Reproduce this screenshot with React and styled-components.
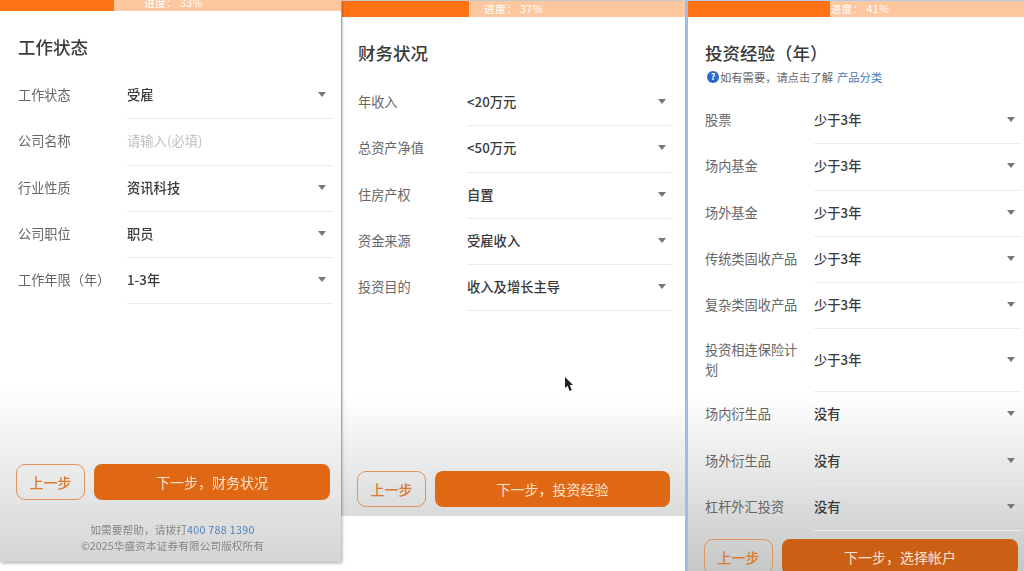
import styled, { createGlobalStyle } from "styled-components";

const GlobalStyle = createGlobalStyle`
  html, body {
    margin: 0;
    height: 571px;
    overflow: hidden;
    background: #fff;
    font-family: "Noto Sans CJK SC", "Noto Sans", sans-serif;
  }
`;

const Page = styled.div`
  position: relative;
  display: flex;
  align-items: flex-start;
  width: 1024px;
  height: 571px;
  overflow: hidden;
  filter: blur(0.4px);
`;

const Panel = styled.section`
  position: relative;
  z-index: ${(p) => p.$layer || 0};
  flex: none;
  box-sizing: border-box;
  display: flex;
  flex-direction: column;
  width: ${(p) => p.$width}px;
  height: ${(p) => p.$height}px;
  overflow: hidden;
  background: linear-gradient(#fff ${(p) => p.$fadeFrom}px, ${(p) => p.$fadeTo} 100%);
  box-shadow: ${(p) => p.$shadow || "none"};
  border-top: ${(p) => p.$top || "0 solid transparent"};
  border-left: ${(p) => p.$left || "0 solid transparent"};
`;

const Track = styled.div`
  position: relative;
  flex: none;
  display: flex;
  align-items: flex-end;
  justify-content: center;
  height: ${(p) => p.$height}px;
  overflow: hidden;
  background: #fdc8a0;
  color: #fff;
  font-size: 10.5px;
  line-height: 16px;
  letter-spacing: 0.5px;
`;

const Fill = styled.div`
  position: absolute;
  left: 0;
  top: 0;
  bottom: 0;
  background: #ff7316;
`;

const ProgressText = styled.span`
  position: relative;
  margin-left: ${(p) => p.$nudge}px;
`;

const Heading = styled.header`
  flex: none;
  padding: 24px 0 ${(p) => p.$gap}px ${(p) => p.$inset}px;
`;

const Title = styled.h2`
  margin: 0;
  font-size: 17.5px;
  font-weight: 500;
  line-height: 24px;
  color: #3a3a3a;
`;

const Hint = styled.p`
  display: flex;
  align-items: center;
  margin: 4px 0 0;
  font-size: 11.3px;
  line-height: 16px;
  color: #666;
`;

const HelpIcon = styled.span`
  flex: none;
  display: flex;
  align-items: center;
  justify-content: center;
  width: 12px;
  height: 12px;
  margin: 0 1px 0 2px;
  border-radius: 50%;
  background: #2c68c9;
  color: #fff;
  font-size: 9px;
  font-weight: 700;
  line-height: 12px;
`;

const Link = styled.span`
  margin-left: 4px;
  color: #3f7ac0;
`;

const Form = styled.div`
  flex: none;
  padding: 0 ${(p) => p.$right}px 8px ${(p) => p.$inset}px;
`;

const Row = styled.div`
  display: flex;
  align-items: center;
  min-height: ${(p) => (p.$tall ? 63 : 46.25)}px;
`;

const Label = styled.div`
  flex: none;
  box-sizing: border-box;
  width: 109px;
  padding: 0 10px 2px 0;
  font-size: 13.2px;
  line-height: 20px;
  color: #666;
`;

const Field = styled.div`
  flex: 1;
  align-self: stretch;
  box-sizing: border-box;
  display: flex;
  align-items: center;
  justify-content: space-between;
  padding: 0 7px 2px 0;
  border-bottom: 1px solid #ececec;
  font-size: 13.3px;
  font-weight: ${(p) => (p.$placeholder ? 400 : 500)};
  color: ${(p) => (p.$placeholder ? "#c0c0c0" : "#3a3a3a")};
`;

const Caret = styled.span`
  width: 0;
  height: 0;
  border-left: 4.5px solid transparent;
  border-right: 4.5px solid transparent;
  border-top: 5.5px solid #777;
`;

const Actions = styled.div`
  flex: none;
  display: flex;
  gap: 9px;
  margin-top: auto;
  padding: 0 ${(p) => p.$right}px ${(p) => p.$bottom}px ${(p) => p.$left}px;
`;

const BackButton = styled.button`
  flex: none;
  box-sizing: border-box;
  width: 69px;
  height: 36px;
  padding: 0;
  border: 1.5px solid #dd9460;
  border-radius: 9px;
  background: transparent;
  color: #dd7a30;
  font: 500 14px "Noto Sans CJK SC", sans-serif;
`;

const NextButton = styled.button`
  flex: 1;
  height: 36px;
  padding: 0;
  border: 0;
  border-radius: 8px;
  background: ${(p) => p.$tone};
  color: #fbe3cf;
  font: 400 14px "Noto Sans CJK SC", sans-serif;
`;

const Legal = styled.footer`
  flex: none;
  padding: 0 0 8px 4px;
  text-align: center;
  font-size: 10.7px;
  line-height: 16px;
  letter-spacing: 0.05px;
  color: #868686;
`;

const Phone = styled.span`
  color: #4d80bd;
  letter-spacing: 0.3px;
`;

const Pointer = styled.svg`
  position: absolute;
  left: 564px;
  top: 377px;
  width: 10px;
  height: 15px;
`;

const work = [
  ["工作状态", "受雇"],
  ["公司名称", "请输入(必填)", true],
  ["行业性质", "资讯科技"],
  ["公司职位", "职员"],
  ["工作年限（年）", "1-3年"],
];

const finance = [
  ["年收入", "<20万元"],
  ["总资产净值", "<50万元"],
  ["住房产权", "自置"],
  ["资金来源", "受雇收入"],
  ["投资目的", "收入及增长主导"],
];

const experience = [
  ["股票", "少于3年"],
  ["场内基金", "少于3年"],
  ["场外基金", "少于3年"],
  ["传统类固收产品", "少于3年"],
  ["复杂类固收产品", "少于3年"],
  ["投资相连保险计划", "少于3年"],
  ["场内衍生品", "没有"],
  ["场外衍生品", "没有"],
  ["杠杆外汇投资", "没有"],
];

const Progress = ({ value, fill, height, nudge = 0 }) => (
  <Track $height={height}>
    <Fill style={{ width: `${fill}%` }} />
    <ProgressText $nudge={nudge}>进度： {value}%</ProgressText>
  </Track>
);

const Rows = ({ items, inset, right }) => (
  <Form $inset={inset} $right={right}>
    {items.map(([label, value, placeholder]) => (
      <Row key={label} $tall={label.length > 7}>
        <Label>{label}</Label>
        <Field $placeholder={placeholder}>
          {value}
          {!placeholder && <Caret />}
        </Field>
      </Row>
    ))}
  </Form>
);

export default function App() {
  return (
    <Page>
      <GlobalStyle />
      <Panel
        $width={341}
        $height={562}
        $fadeFrom={385}
        $fadeTo="#d4d5d5"
        $layer={1}
        $shadow="1px 1px 3px rgba(0,0,0,.35)"
      >
        <Progress value={33} fill={33.4} height={11} nudge={6} />
        <Heading $inset={18} $gap={14}>
          <Title>工作状态</Title>
        </Heading>
        <Rows items={work} inset={18} right={8} />
        <Actions $left={16} $right={11} $bottom={22}>
          <BackButton>上一步</BackButton>
          <NextButton $tone="#e06814">下一步，财务状况</NextButton>
        </Actions>
        <Legal>
          <div>
            如需要帮助，请拨打<Phone>400 788 1390</Phone>
          </div>
          <div>©2025华盛资本证券有限公司版权所有</div>
        </Legal>
      </Panel>
      <Panel
        $width={344}
        $height={516}
        $fadeFrom={395}
        $fadeTo="#d9dada"
        $top="1px solid #c9c9c9"
        $left="1px solid #d2d2d2"
      >
        <Progress value={37} fill={37} height={16} />
        <Heading $inset={16} $gap={15}>
          <Title>财务状况</Title>
        </Heading>
        <Rows items={finance} inset={16} right={12} />
        <Actions $left={15} $right={15} $bottom={9}>
          <BackButton>上一步</BackButton>
          <NextButton $tone="#e06814">下一步，投资经验</NextButton>
        </Actions>
      </Panel>
      <Panel
        $width={339}
        $height={571}
        $fadeFrom={395}
        $fadeTo="#c6c7c7"
        $top="1px solid #b5cdea"
        $left="3px solid #9dbde6"
      >
        <Progress value={41} fill={42.2} height={16} nudge={8} />
        <Heading $inset={17} $gap={13}>
          <Title>投资经验（年）</Title>
          <Hint>
            <HelpIcon>?</HelpIcon>如有需要，请点击了解<Link>产品分类</Link>
          </Hint>
        </Heading>
        <Rows items={experience} inset={17} right={2} />
        <Actions $left={16} $right={6} $bottom={0}>
          <BackButton>上一步</BackButton>
          <NextButton $tone="#cb5f14">下一步，选择帐户</NextButton>
        </Actions>
      </Panel>
      <Pointer viewBox="0 0 10 15">
        <path d="M1 0v11l2.6-2.3L5.6 14l2.2-1-2-5H9z" fill="#222" />
      </Pointer>
    </Page>
  );
}
